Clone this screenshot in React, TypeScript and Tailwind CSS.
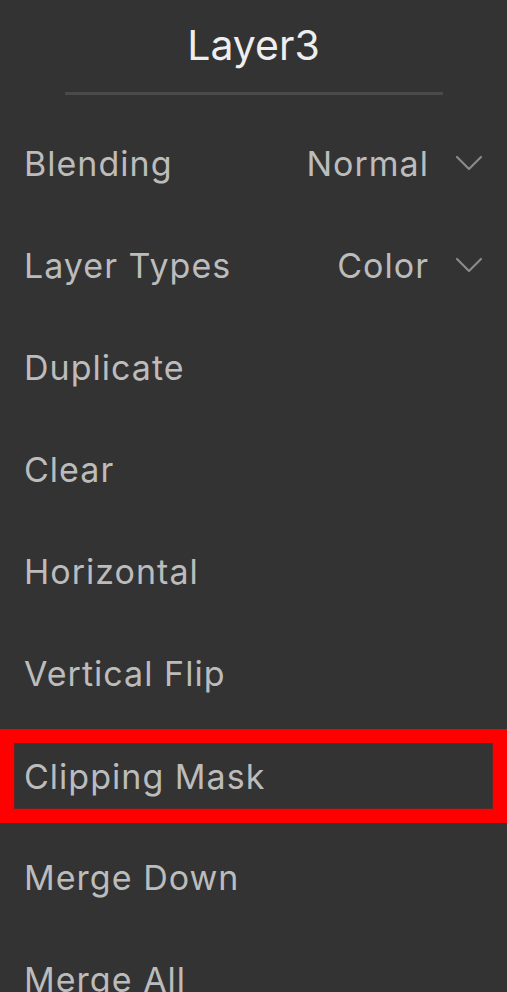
import React from "react";

const items = ["Duplicate", "Clear", "Horizontal", "Vertical Flip"];

function Chevron() {
  return (
    <svg width="28" height="16" viewBox="0 0 28 16" fill="none" className="ml-[26px]">
      <path d="M2 2 L14 14 L26 2" stroke="#8a8a8a" strokeWidth="2.2" strokeLinecap="round" strokeLinejoin="round" />
    </svg>
  );
}

function Row({ label, value }: { label: string; value?: string }) {
  return (
    <div className="flex h-[102px] items-center justify-between pl-6 pr-6">
      <span>{label}</span>
      {value && (
        <div className="flex items-center">
          <span>{value}</span>
          <Chevron />
        </div>
      )}
    </div>
  );
}

export default function App() {
  return (
    <div
      className="h-[992px] w-[507px] overflow-hidden bg-[#333333] text-[34px] tracking-[0.03em] text-[#bcbcbc]"
      style={{ fontFamily: "Inter, 'Noto Sans', sans-serif" }}
    >
      <header className="flex flex-col items-center">
        <div className="flex h-[92px] items-center text-[41px] tracking-normal text-[#eeeeee]">Layer3</div>
        <div className="h-[3px] w-[378px] bg-[#4a4a4a]" />
      </header>

      <div className="mt-[17px]">
        <Row label="Blending" value="Normal" />
        <Row label="Layer Types" value="Color" />
        {items.map((it) => (
          <Row key={it} label={it} />
        ))}
        <div className="flex h-[102px] items-center">
          <div className="mt-[2px] flex h-[94px] w-full items-center border-[14px] border-[#ff0000] pl-[10px] shadow-[inset_0_0_0_1px_#5a2a2a]">
            Clipping Mask
          </div>
        </div>
        <Row label="Merge Down" />
        <Row label="Merge All" />
      </div>
    </div>
  );
}
